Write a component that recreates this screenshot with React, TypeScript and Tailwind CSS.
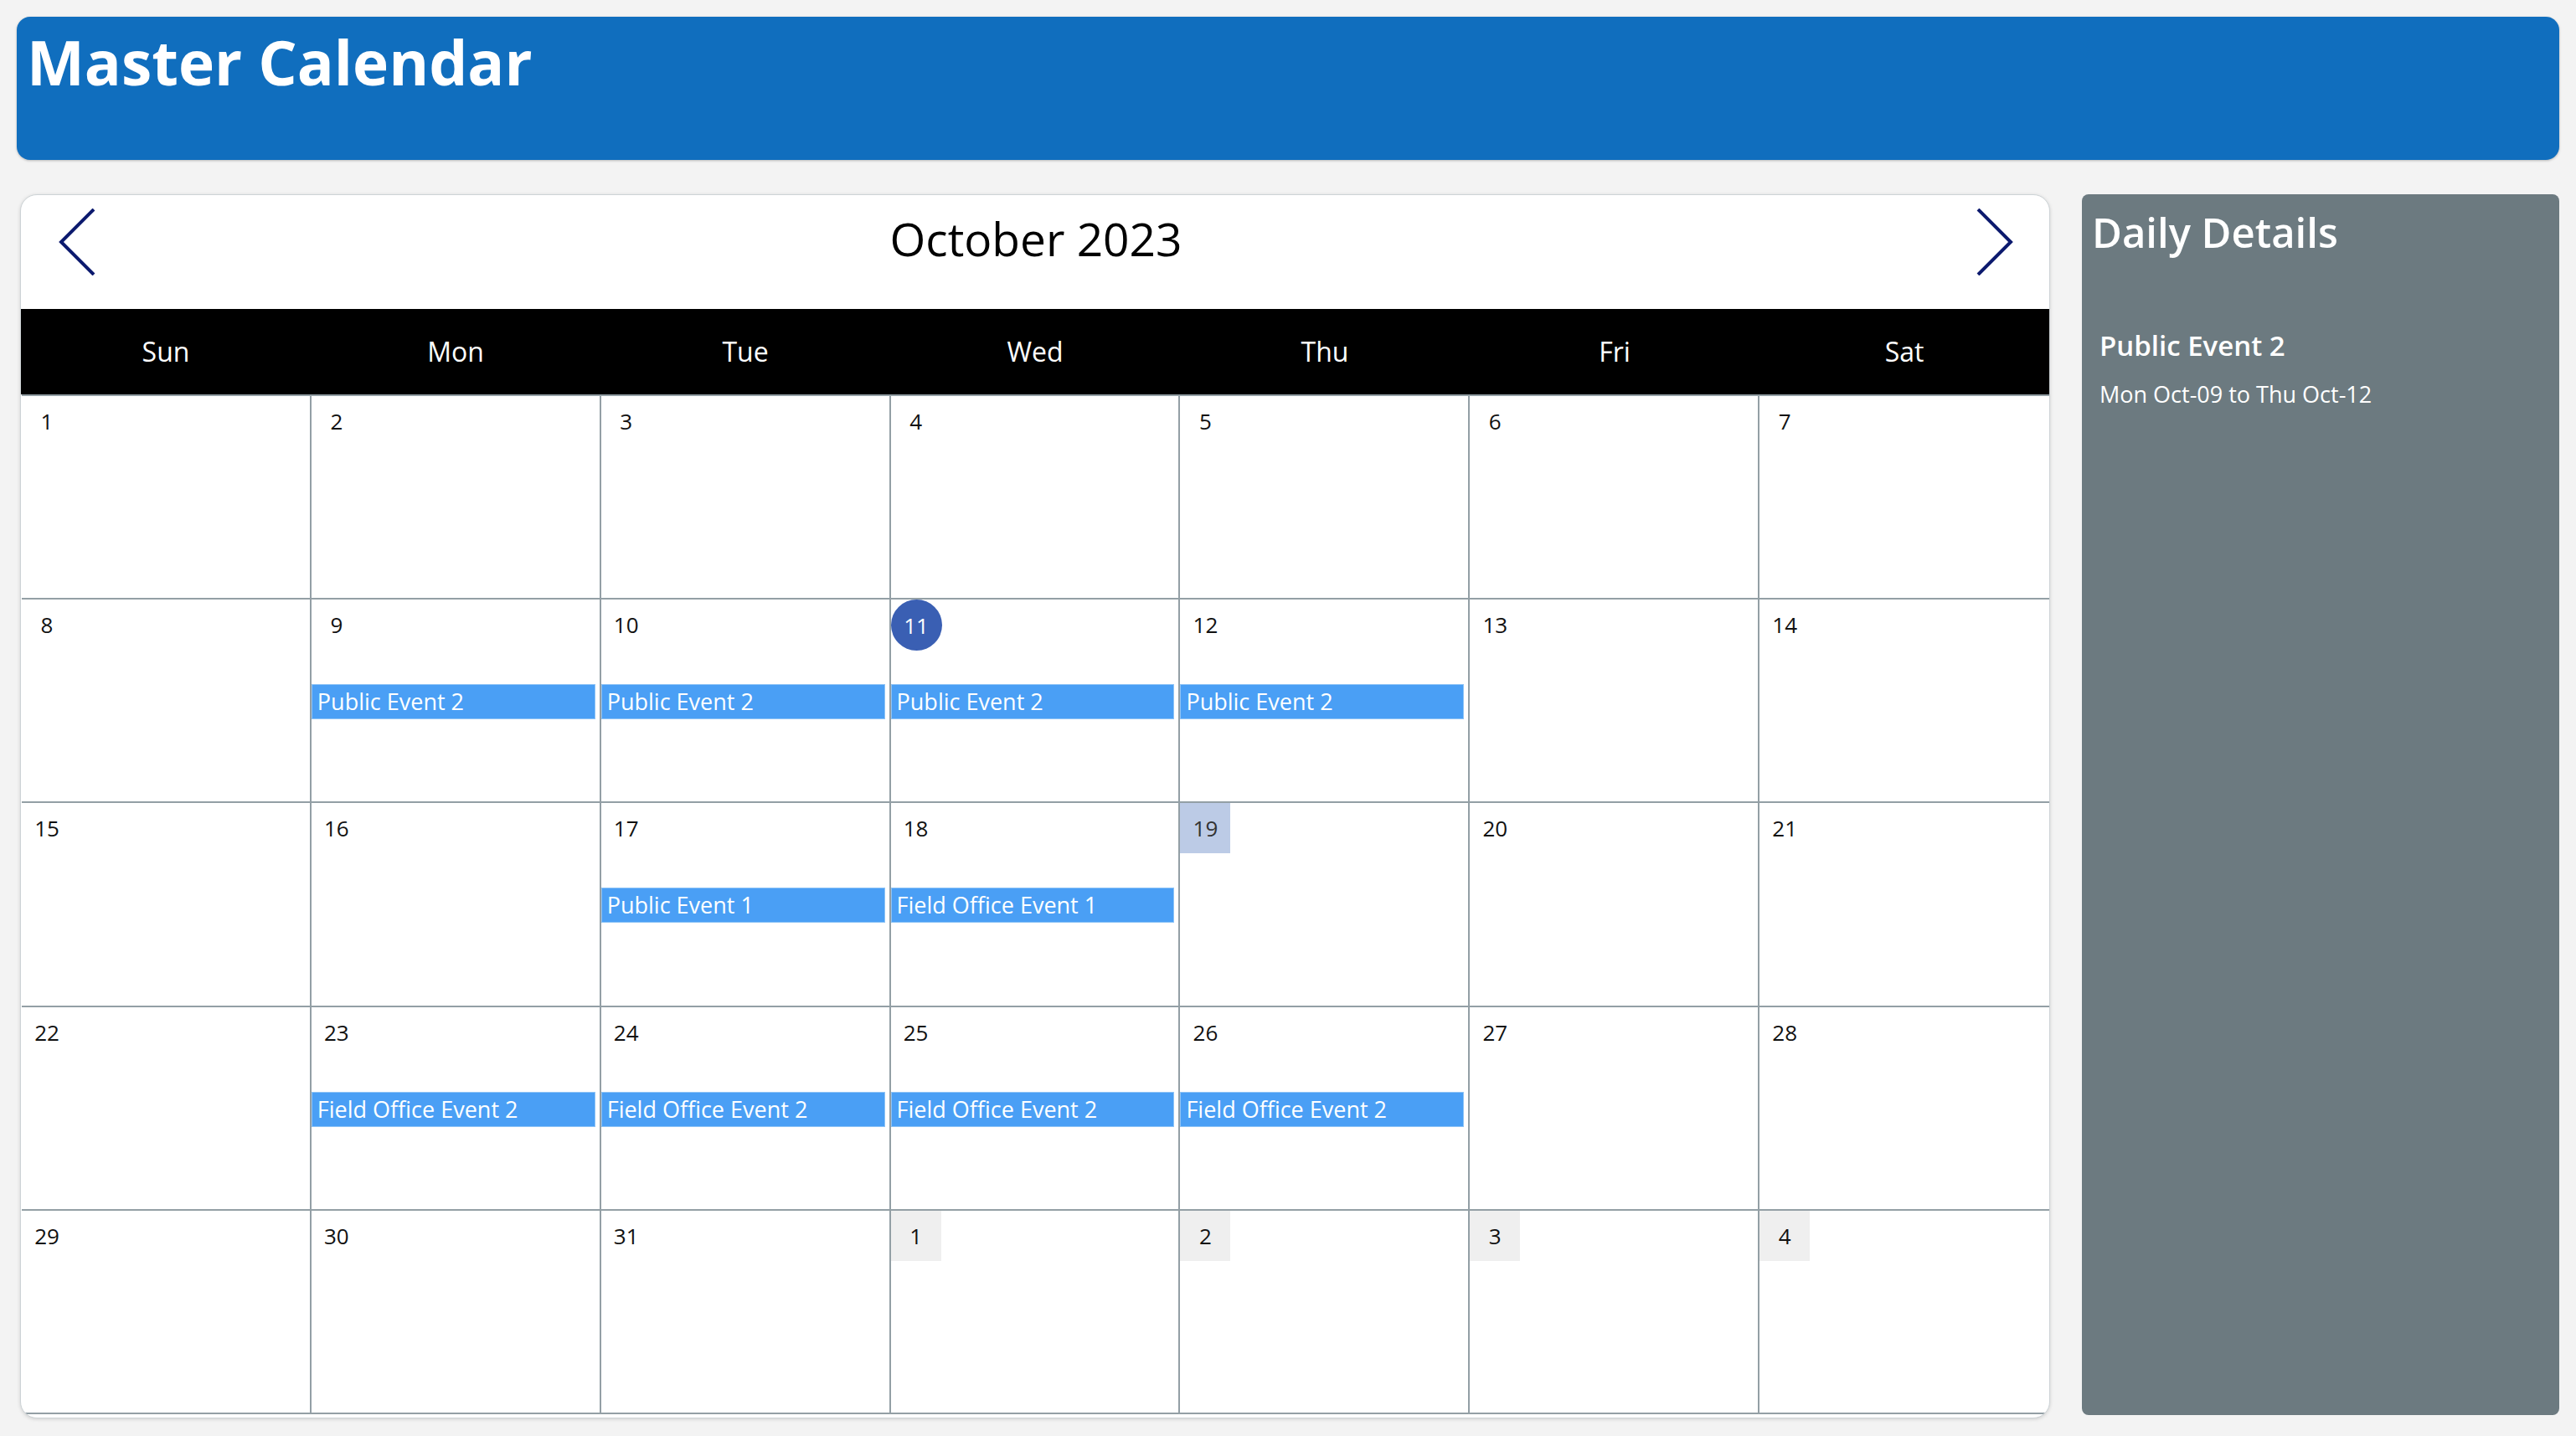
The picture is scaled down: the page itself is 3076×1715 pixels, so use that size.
import React from "react";

type Cell = {
  n: number;
  other?: boolean;
  today?: boolean;
  selected?: boolean;
  event?: string;
};

const weeks: Cell[][] = [
  [{ n: 1 }, { n: 2 }, { n: 3 }, { n: 4 }, { n: 5 }, { n: 6 }, { n: 7 }],
  [
    { n: 8 },
    { n: 9, event: "Public Event 2" },
    { n: 10, event: "Public Event 2" },
    { n: 11, today: true, event: "Public Event 2" },
    { n: 12, event: "Public Event 2" },
    { n: 13 },
    { n: 14 },
  ],
  [
    { n: 15 },
    { n: 16 },
    { n: 17, event: "Public Event 1" },
    { n: 18, event: "Field Office Event 1" },
    { n: 19, selected: true },
    { n: 20 },
    { n: 21 },
  ],
  [
    { n: 22 },
    { n: 23, event: "Field Office Event 2" },
    { n: 24, event: "Field Office Event 2" },
    { n: 25, event: "Field Office Event 2" },
    { n: 26, event: "Field Office Event 2" },
    { n: 27 },
    { n: 28 },
  ],
  [
    { n: 29 },
    { n: 30 },
    { n: 31 },
    { n: 1, other: true },
    { n: 2, other: true },
    { n: 3, other: true },
    { n: 4, other: true },
  ],
];

const days = ["Sun", "Mon", "Tue", "Wed", "Thu", "Fri", "Sat"];

function Chevron({ dir }: { dir: "left" | "right" }) {
  return (
    <svg width="44" height="80" viewBox="0 0 44 80" className="shrink-0 mt-[16px]">
      <polyline
        points={dir === "left" ? "42,1 3,40 42,79" : "2,1 41,40 2,79"}
        fill="none"
        stroke="#0c1a6e"
        strokeWidth="4"
      />
    </svg>
  );
}

function DayCell({ c, last }: { c: Cell; last: boolean }) {
  let box = "w-[60px] h-[60px] flex items-center justify-center text-[26px] leading-none text-[#111]";
  if (c.today) box = "w-[61px] h-[61px] rounded-full bg-[#3a5fb3] flex items-center justify-center text-[26px] leading-none text-white";
  else if (c.selected) box = "w-[60px] h-[60px] bg-[#bccbe6] flex items-center justify-center text-[26px] leading-none text-[#333]";
  else if (c.other) box = "w-[60px] h-[60px] bg-[#efefef] flex items-center justify-center text-[26px] leading-none text-[#111]";
  return (
    <div
      className={
        last
          ? "border-t-2 border-[#939fa5] flex flex-col min-w-0"
          : "border-t-2 border-r-2 border-[#939fa5] flex flex-col min-w-0"
      }
    >
      <div className={c.today ? "h-[60px]" : ""}>
        <div className={box}>{c.n}</div>
      </div>
      {c.event && (
        <div className="mt-[41px] mr-[5px] h-[42px] bg-[#4a9ff5] border border-[#8fc4f6] text-white text-[27px] leading-[40px] pl-[6px] whitespace-nowrap overflow-hidden">
          {c.event}
        </div>
      )}
    </div>
  );
}

export default function App() {
  return (
    <div className="w-[3076px] h-[1715px] bg-[#f3f3f3] font-['Open_Sans',sans-serif] overflow-hidden">
      <div className="mx-[20px] mt-[20px] h-[171px] rounded-[16px] bg-[#106ebe] shadow-[0_1px_3px_rgba(0,0,0,0.25)] pt-[17px] pl-[12px]">
        <div className="text-white font-bold text-[73px] leading-none">Master Calendar</div>
      </div>

      <div className="flex mt-[41px] ml-[24px] gap-[38px] items-start">
        <div className="w-[2424px] h-[1462px] bg-white border border-[#cdd3d6] rounded-[20px] overflow-hidden shadow-[0_1px_4px_rgba(0,0,0,0.15)] flex flex-col">
          <div className="h-[136px] shrink-0 flex items-start justify-between pl-[45px] pr-[43px]">
            <Chevron dir="left" />
            <div className="mt-[24px] text-[55px] leading-none text-black">October 2023</div>
            <Chevron dir="right" />
          </div>
          <div className="h-[102px] shrink-0 bg-black grid grid-cols-7">
            {days.map((d) => (
              <div key={d} className="flex items-center justify-center text-white text-[32px] leading-none">
                {d}
              </div>
            ))}
          </div>
          <div className="h-[1218px] shrink-0 grid grid-cols-7 grid-rows-5 border-b-2 border-[#939fa5] pl-[1px]">
            {weeks.flatMap((w, wi) =>
              w.map((c, ci) => <DayCell key={`${wi}-${ci}`} c={c} last={ci === 6} />)
            )}
          </div>
        </div>

        <div className="w-[570px] h-[1458px] bg-[#6c7a80] rounded-[8px] pl-[20px] pt-[21px] text-white">
          <div className="text-[49px] font-semibold leading-none -ml-[8px]">Daily Details</div>
          <div className="mt-[94px] text-[33px] font-semibold leading-none ml-[1px]">Public Event 2</div>
          <div className="mt-[28px] text-[27px] leading-none ml-[1px]">Mon Oct-09 to Thu Oct-12</div>
        </div>
      </div>
    </div>
  );
}
